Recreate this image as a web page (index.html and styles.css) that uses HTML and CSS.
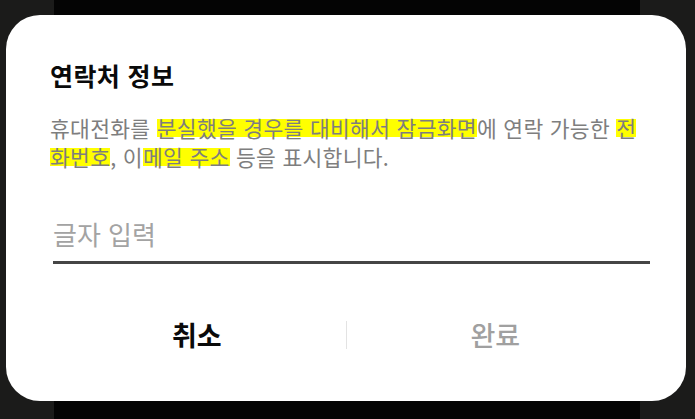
FILE: index.html
```html
<!DOCTYPE html>
<html lang="ko">
<head>
<meta charset="utf-8">
<link rel="stylesheet" href="styles.css">
</head>
<body>
<div class="screen">
  <div class="dialog">
    <h1 class="title">연락처 정보</h1>
    <p class="desc">휴대전화를 <span class="hl">분실했을 경우를 대비해서 잠금화면</span>에 연락 가능한 <span class="hl">전</span><br><span class="hl">화번호</span>, 이<span class="hl">메일 주소</span> 등을 표시합니다.</p>
    <div class="field"><span class="placeholder">글자 입력</span></div>
    <div class="actions">
      <div class="btn cancel">취소</div>
      <div class="divider"></div>
      <div class="btn done">완료</div>
    </div>
  </div>
</div>
</body>
</html>
```
FILE: styles.css
```css
html, body {
  margin: 0;
  padding: 0;
}
body {
  width: 695px;
  height: 419px;
  overflow: hidden;
  background: linear-gradient(to right, #1b1b1a 0, #1b1b1a 54px, #040404 54px, #040404 640px, #1b1b1a 640px);
  font-family: "Noto Sans CJK KR", "Noto Sans", sans-serif;
}
.screen {
  padding: 15px 9px 0 6px;
}
.dialog {
  width: 680px;
  height: 386px;
  box-sizing: border-box;
  background: #ffffff;
  border-radius: 34px;
  padding: 45px 30px 0 44px;
}
.title {
  margin: 0;
  font-size: 25px;
  letter-spacing: 0.4px;
  line-height: 30px;
  font-weight: 700;
  color: #0a0a0a;
}
.desc {
  margin: 23px 0 0 0;
  font-size: 21.5px;
  letter-spacing: 0.3px;
  line-height: 29px;
  color: #7e7e7e;
  white-space: nowrap;
}
.hl {
  background: linear-gradient(to bottom, transparent 22%, #ffff00 22%, #ffff00 82%, transparent 82%);
}
.field {
  margin: 46px 6px 0 3px;
  padding-bottom: 6px;
  border-bottom: 3px solid #454545;
  line-height: 34px;
}
.placeholder {
  font-size: 26px;
  color: #a3a3a3;
}
.actions {
  margin: 46px 0 0 -2px;
  width: 596px;
  display: flex;
  align-items: center;
  height: 50px;
}
.btn {
  flex: 1;
  text-align: center;
  font-size: 27px;
  line-height: 50px;
}
.cancel {
  font-weight: 700;
  color: #0a0a0a;
}
.done {
  font-weight: 500;
  color: #a0a0a0;
}
.divider {
  width: 1px;
  height: 28px;
  background: #e3e3e3;
}
```
